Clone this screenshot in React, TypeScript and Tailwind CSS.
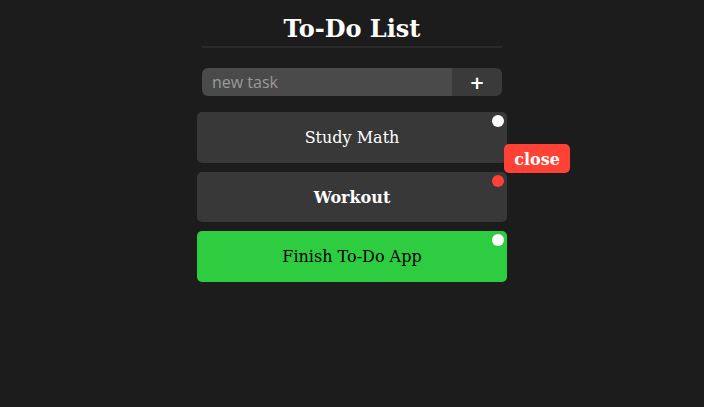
import { useState } from "react";

const tasks = [
  { id: 1, title: "Study Math", done: false, important: false, showClose: true },
  { id: 2, title: "Workout", done: false, important: true, showClose: false },
  { id: 3, title: "Finish To-Do App", done: true, important: false, showClose: false },
];

export default function App() {
  const [text, setText] = useState("");

  return (
    <div className="min-h-screen bg-[#1c1c1c] font-['DejaVu_Serif',serif]">
      <div className="mx-auto flex w-[310px] flex-col items-center pt-[14px]">
        <h1 className="w-[300px] border-b-2 border-[#2a2a2a] pb-[2px] text-center text-[24px] font-bold leading-[30px] text-white">
          To-Do List
        </h1>

        <form
          className="mt-[20px] flex h-[28px] w-[300px] overflow-hidden rounded-[6px]"
          onSubmit={(e) => e.preventDefault()}
        >
          <input
            value={text}
            onChange={(e) => setText(e.target.value)}
            placeholder="new task"
            className="w-[250px] bg-[#4a4a4a] px-[10px] font-['Open_Sans',sans-serif] text-[16px] text-white outline-none placeholder:text-[#9a9a9a]"
          />
          <button className="flex w-[50px] items-center justify-center bg-[#3a3a3a] font-['DejaVu_Sans',sans-serif] text-[18px] font-bold text-white">
            +
          </button>
        </form>

        <ul className="mt-[16px] flex w-[310px] flex-col gap-[9px]">
          {tasks.map((t) => (
            <li
              key={t.id}
              className={`relative flex h-[50.5px] items-center justify-center rounded-[5px] pt-[2px] text-[16px] ${
                t.done ? "bg-[#2ecc40] text-black" : "bg-[#383838] text-white"
              } ${t.important ? "font-bold" : ""}`}
            >
              {t.title}
              <span
                className={`absolute right-[3px] top-[3px] h-[12px] w-[12px] rounded-full ${
                  t.important ? "bg-[#ff4136]" : "bg-white"
                }`}
              />
              {t.showClose && (
                <button className="absolute left-[307px] top-[32px] z-10 h-[29px] w-[66px] rounded-[5px] bg-[#ff4136] pt-[2px] text-[16px] font-bold text-white">
                  close
                </button>
              )}
            </li>
          ))}
        </ul>
      </div>
    </div>
  );
}
